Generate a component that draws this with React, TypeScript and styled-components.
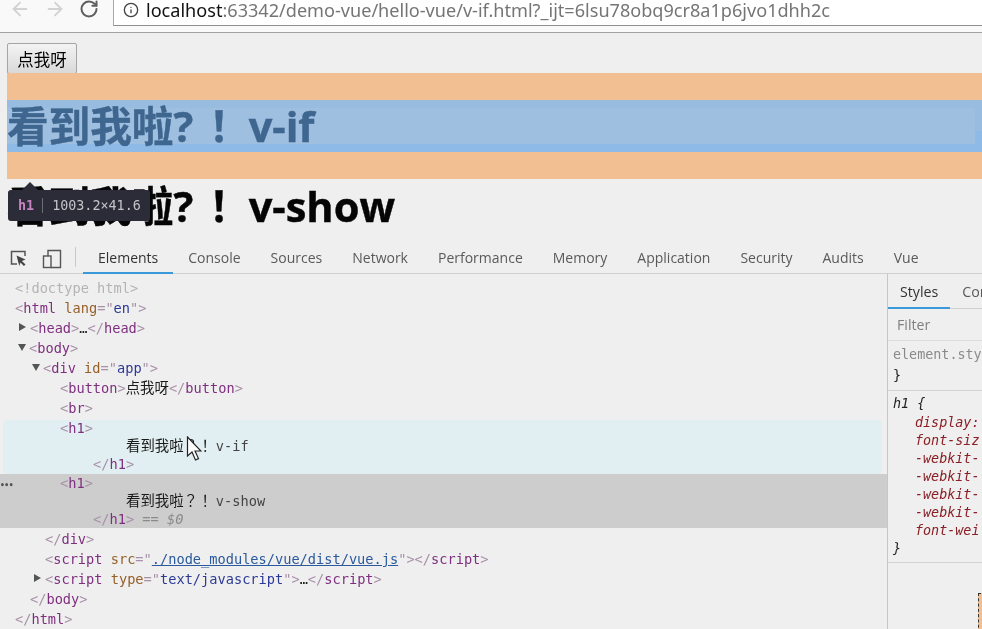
import React from "react";
import styled, { createGlobalStyle } from "styled-components";
import { ArrowLeft, ArrowRight, RotateCw, Info } from "lucide-react";

const Global = createGlobalStyle`
  html, body { margin: 0; padding: 0; background: #efefef; }
`;

const Screen = styled.div`
  position: relative;
  width: 982px;
  height: 629px;
  overflow: hidden;
  background: #efefef;
  filter: blur(0.4px);
  font-family: "Open Sans", "Noto Sans CJK SC", sans-serif;
`;

const BrowserBar = styled.header`
  display: flex;
  align-items: flex-start;
  height: 32px;
  background: #f9f9f9;
  border-bottom: 1px solid #a2a2a2;
`;

const NavIcons = styled.div`
  display: flex;
  align-items: center;
  gap: 13px;
  width: 113px;
  height: 17px;
  padding-left: 9px;
  box-sizing: border-box;
`;

const AddressBox = styled.div`
  flex: 1;
  min-width: 0;
  display: flex;
  align-items: center;
  gap: 7px;
  height: 26px;
  padding: 0 0 5px 9px;
  box-sizing: border-box;
  background: #fff;
  border-left: 1px solid #a8a8a8;
  border-bottom: 1px solid #8f8f8f;
  color: #757575;
  font-family: "Noto Sans", sans-serif;
  font-size: 18.1px;
  white-space: nowrap;
`;

const Host = styled.span`
  color: #111;
`;

const PageArea = styled.section`
  height: 207px;
  box-sizing: border-box;
  padding: 10px 0 0 7px;
`;

const PageButton = styled.button`
  display: block;
  width: 70px;
  height: 31px;
  padding: 0;
  border: 1px solid #a5a5a5;
  border-radius: 2px;
  background: linear-gradient(#f3f3f3, #d9d9d9);
  color: #000;
  font-family: "Noto Sans CJK SC", sans-serif;
  font-size: 16.5px;
`;

const MarginBox = styled.div`
  margin-top: -1px;
  padding: 27px 0;
  background: #f1bf92;
`;

const ContentBox = styled.div`
  height: 52px;
  box-sizing: border-box;
  padding: 8px 7px 8px 0;
  background: linear-gradient(#97bcdf 0 60%, #8dbae6 60% 100%);
`;

const ContentInner = styled.div`
  display: flow-root;
  height: 100%;
  background: #9ebfdf;
`;

const Heading = styled.h1<{ $tinted?: boolean }>`
  margin: ${(p) => (p.$tinted ? "-8px 0 0" : "1px 0 0")};
  height: 52px;
  font-family: "Open Sans", "Noto Sans CJK TC", sans-serif;
  font-size: 41.6px;
  line-height: 52px;
  font-weight: 700;
  word-spacing: -2px;
  white-space: nowrap;
  -webkit-text-stroke: 0.4px currentColor;
  color: ${(p) => (p.$tinted ? "#3f668f" : "#050505")};
`;

const Question = styled.span`
  margin-right: 5px;
`;

const Tooltip = styled.div`
  position: absolute;
  left: 8px;
  top: 190px;
  display: flex;
  align-items: center;
  width: 142px;
  height: 31px;
  box-sizing: border-box;
  padding-left: 10px;
  border-radius: 3px;
  background: #2c2c38;
  font-family: "DejaVu Sans Mono", monospace;
  font-size: 13.4px;
  color: #c4c4c8;
  &::before {
    content: "";
    position: absolute;
    left: 14px;
    top: -8px;
    border-left: 8px solid transparent;
    border-right: 8px solid transparent;
    border-bottom: 8px solid #2c2c38;
  }
`;

const TipTag = styled.span`
  color: #c583c0;
  font-weight: 700;
  padding-right: 8px;
  margin-right: 9px;
  border-right: 1px solid #6c6c74;
`;

const Toolbar = styled.nav`
  display: flex;
  align-items: stretch;
  height: 34px;
  box-sizing: border-box;
  border-bottom: 1px solid #cfcfcf;
`;

const ToolIcons = styled.div`
  display: flex;
  align-items: center;
  gap: 14px;
  width: 75px;
  padding: 4px 0 0 9px;
  box-sizing: border-box;
`;

const Separator = styled.div`
  width: 1px;
  height: 20px;
  margin: 7px 7px 0 0;
  background: #c8c8c8;
`;

const Tab = styled.div<{ $active?: boolean }>`
  height: 34px;
  box-sizing: border-box;
  padding: 3px 15px 0;
  display: flex;
  align-items: center;
  font-size: 14px;
  white-space: nowrap;
  color: ${(p) => (p.$active ? "#333" : "#5a5a5a")};
  border-bottom: 2px solid ${(p) => (p.$active ? "#3a9ad9" : "transparent")};
`;

const Panels = styled.main`
  display: flex;
  height: 355px;
`;

const Tree = styled.div`
  width: 887px;
  padding-top: 4px;
  font-family: "DejaVu Sans Mono", "Noto Sans CJK TC", monospace;
  font-size: 13.65px;
  color: #222;
`;

const Row = styled.div<{ $indent: number; $h?: number }>`
  position: relative;
  height: ${(p) => p.$h ?? 20}px;
  line-height: ${(p) => p.$h ?? 20}px;
  padding-left: ${(p) => p.$indent}px;
  white-space: pre;
`;

const Toggle = styled.span<{ $open?: boolean }>`
  display: inline-block;
  width: 0;
  height: 0;
  margin-left: -11px;
  margin-right: 3px;
  vertical-align: 2px;
  ${(p) =>
    p.$open
      ? `border-left: 4px solid transparent; border-right: 4px solid transparent; border-top: 7px solid #555; margin-right: 3px; margin-left: -12px;`
      : `border-top: 4px solid transparent; border-bottom: 4px solid transparent; border-left: 7px solid #555; margin-right: 4px;`}
`;

const Punct = styled.span`
  color: #a890a8;
`;
const Tag = styled.span`
  color: #7f2f7f;
`;
const Attr = styled.span`
  color: #96602a;
`;
const Val = styled.span`
  color: #2c3a96;
`;
const Link = styled.span`
  color: #2a5a9c;
  text-decoration: underline;
`;
const Muted = styled.span`
  color: #b4b4b4;
`;
const Dollar = styled.span`
  color: #8a8a8a;
  font-style: italic;
`;
const Cjk = styled.span`
  color: #1a1a1a;
  font-size: 14.4px;
`;
const Phrase = styled(Cjk)`
  margin-right: 3.5px;
`;
const Plain = styled.span`
  color: #444;
`;

const HoverBlock = styled.div`
  height: 54px;
  margin: 2px 5px 0 3px;
  border-radius: 4px;
  background: #e1eff2;
  & > div {
    margin-left: -3px;
  }
`;

const SelectedBlock = styled.div`
  height: 54px;
  margin-bottom: 1px;
  background: #cdcdcd;
`;

const Dots = styled.span`
  position: absolute;
  left: 0;
  top: 8px;
  font-size: 8px;
  line-height: 8px;
  font-weight: 700;
  letter-spacing: -0.5px;
  color: #555;
`;

const Cursor = styled.svg`
  position: absolute;
  left: 186px;
  top: 436px;
`;

const Side = styled.aside`
  width: 95px;
  border-left: 1px solid #c6c6c6;
  box-sizing: border-box;
  overflow: hidden;
`;

const SideTabs = styled.div`
  display: flex;
  height: 35px;
  box-sizing: border-box;
  border-bottom: 1px solid #cfcfcf;
`;

const SideTab = styled.div<{ $active?: boolean }>`
  flex: none;
  height: 35px;
  box-sizing: border-box;
  padding: 2px 12px 0;
  display: flex;
  align-items: center;
  font-size: 14.2px;
  color: ${(p) => (p.$active ? "#333" : "#5a5a5a")};
  border-bottom: 2px solid ${(p) => (p.$active ? "#3a9ad9" : "transparent")};
`;

const Filter = styled.div`
  height: 32px;
  line-height: 32px;
  padding-left: 9px;
  box-sizing: border-box;
  border-bottom: 1px solid #dcdcdc;
  font-size: 14.2px;
  color: #808080;
`;

const Rule = styled.div`
  padding: 3px 0 4px 5px;
  border-bottom: 1px solid #d4d4d4;
  font-family: "DejaVu Sans Mono", monospace;
  font-size: 13.4px;
  white-space: nowrap;
`;

const RuleLine = styled.div<{ $muted?: boolean; $italic?: boolean; $h?: number }>`
  height: ${(p) => p.$h ?? 18}px;
  line-height: ${(p) => p.$h ?? 18}px;
  color: ${(p) => (p.$muted ? "#8a8a8a" : "#222")};
  font-style: ${(p) => (p.$italic ? "italic" : "normal")};
`;

const Prop = styled.div`
  height: 18px;
  line-height: 18px;
  padding-left: 22px;
  font-style: italic;
  color: #8a1f25;
`;

const BoxModel = styled.div`
  width: 8px;
  height: 40px;
  margin: 30px 0 0 90px;
  box-sizing: border-box;
  background: #f1bf92;
  border: 1px dashed #333;
`;

const lt = <Punct>&lt;</Punct>;
const gt = <Punct>&gt;</Punct>;
const open = (n: string) => (
  <>
    {lt}
    <Tag>{n}</Tag>
    {gt}
  </>
);
const close = (n: string) => (
  <>
    <Punct>&lt;/</Punct>
    <Tag>{n}</Tag>
    {gt}
  </>
);

const tabs = ["Console", "Sources", "Network", "Performance", "Memory", "Application", "Security", "Audits", "Vue"];
const props = ["display:", "font-siz", "-webkit-", "-webkit-", "-webkit-", "-webkit-", "font-wei"];

export default function App() {
  return (
    <Screen>
      <Global />
      <BrowserBar>
        <NavIcons>
          <ArrowLeft size={22} color="#d2d2d2" strokeWidth={2} />
          <ArrowRight size={22} color="#d2d2d2" strokeWidth={2} />
          <RotateCw size={20} color="#5f5f5f" strokeWidth={2.4} />
        </NavIcons>
        <AddressBox>
          <Info size={16} color="#444" strokeWidth={2} />
          <span>
            <Host>localhost</Host>:63342/demo-vue/hello-vue/v-if.html?_ijt=6lsu78obq9cr8a1p6jvo1dhh2c
          </span>
        </AddressBox>
      </BrowserBar>

      <PageArea>
        <PageButton>点我呀</PageButton>
        <MarginBox>
          <ContentBox>
            <ContentInner>
              <Heading $tinted>
                看到我啦<Question>?</Question>！ v-if
              </Heading>
            </ContentInner>
          </ContentBox>
        </MarginBox>
        <Heading>
          看到我啦<Question>?</Question>！ v-show
        </Heading>
      </PageArea>
      <Tooltip>
        <TipTag>h1</TipTag>1003.2×41.6
      </Tooltip>

      <Toolbar>
        <ToolIcons>
          <svg width="19" height="19" viewBox="0 0 19 19" fill="none">
            <path d="M8 15H2.500V2.500H16V7" stroke="#555" strokeWidth="1.5" />
            <path d="M7.500 6.500l9 4-3.600 1.400 3.600 3.600-1.600 1.600-3.400-3.600-1.200 3.400z" fill="#444" />
          </svg>
          <svg width="20" height="20" viewBox="0 0 20 20" fill="none" stroke="#555" strokeWidth="1.4">
            <path d="M6 7V1.500h12.500v17H9" />
            <rect x="1.500" y="7" width="7.500" height="11.500" />
          </svg>
        </ToolIcons>
        <Separator />
        <Tab $active>Elements</Tab>
        {tabs.map((t) => (
          <Tab key={t}>{t}</Tab>
        ))}
      </Toolbar>

      <Panels>
        <Tree>
          <Row $indent={15}>
            <Muted>&lt;!doctype html&gt;</Muted>
          </Row>
          <Row $indent={15}>
            {lt}
            <Tag>html</Tag> <Attr>lang</Attr>
            <Punct>=</Punct>
            <Punct>"</Punct>
            <Val>en</Val>
            <Punct>"</Punct>
            {gt}
          </Row>
          <Row $indent={30}>
            <Toggle />
            {open("head")}…{close("head")}
          </Row>
          <Row $indent={30}>
            <Toggle $open />
            {open("body")}
          </Row>
          <Row $indent={44}>
            <Toggle $open />
            {lt}
            <Tag>div</Tag> <Attr>id</Attr>
            <Punct>=</Punct>
            <Punct>"</Punct>
            <Val>app</Val>
            <Punct>"</Punct>
            {gt}
          </Row>
          <Row $indent={60}>
            {open("button")}
            <Cjk>点我呀</Cjk>
            {close("button")}
          </Row>
          <Row $indent={60}>{open("br")}</Row>
          <HoverBlock>
            <Row $indent={60} $h={17}>
              {open("h1")}
            </Row>
            <Row $indent={126} $h={18}>
              <Phrase>看到我啦？！</Phrase>
              <Plain>v-if</Plain>
            </Row>
            <Row $indent={93} $h={19}>
              {close("h1")}
            </Row>
          </HoverBlock>
          <SelectedBlock>
            <Row $indent={60} $h={18}>
              <Dots>•••</Dots>
              {open("h1")}
            </Row>
            <Row $indent={126} $h={18}>
              <Phrase>看到我啦？！</Phrase>
              <Plain>v-show</Plain>
            </Row>
            <Row $indent={93} $h={18}>
              {close("h1")}
              <Dollar> == $0</Dollar>
            </Row>
          </SelectedBlock>
          <Row $indent={45}>{close("div")}</Row>
          <Row $indent={45}>
            {lt}
            <Tag>script</Tag> <Attr>src</Attr>
            <Punct>="</Punct>
            <Link>./node_modules/vue/dist/vue.js</Link>
            <Punct>"</Punct>
            {gt}
            {close("script")}
          </Row>
          <Row $indent={45}>
            <Toggle />
            {lt}
            <Tag>script</Tag> <Attr>type</Attr>
            <Punct>="</Punct>
            <Val>text/javascript</Val>
            <Punct>"</Punct>
            {gt}…{close("script")}
          </Row>
          <Row $indent={30}>{close("body")}</Row>
          <Row $indent={15}>{close("html")}</Row>
        </Tree>

        <Side>
          <SideTabs>
            <SideTab $active>Styles</SideTab>
            <SideTab>Computed</SideTab>
          </SideTabs>
          <Filter>Filter</Filter>
          <Rule>
            <RuleLine $muted $h={21}>element.style {"{"}</RuleLine>
            <RuleLine $h={21}>{"}"}</RuleLine>
          </Rule>
          <Rule>
            <RuleLine $italic $h={20}>h1 {"{"}</RuleLine>
            {props.map((p, i) => (
              <Prop key={i}>{p}</Prop>
            ))}
            <RuleLine $italic>{"}"}</RuleLine>
          </Rule>
          <BoxModel />
        </Side>
      </Panels>

      <Cursor width="16" height="26" viewBox="0 0 16 26">
        <path d="M1.500 1v19l4.500-4 3.500 8 3-1.400-3.500-7.600h6z" fill="#fff" stroke="#222" strokeWidth="1.2" />
      </Cursor>
    </Screen>
  );
}
